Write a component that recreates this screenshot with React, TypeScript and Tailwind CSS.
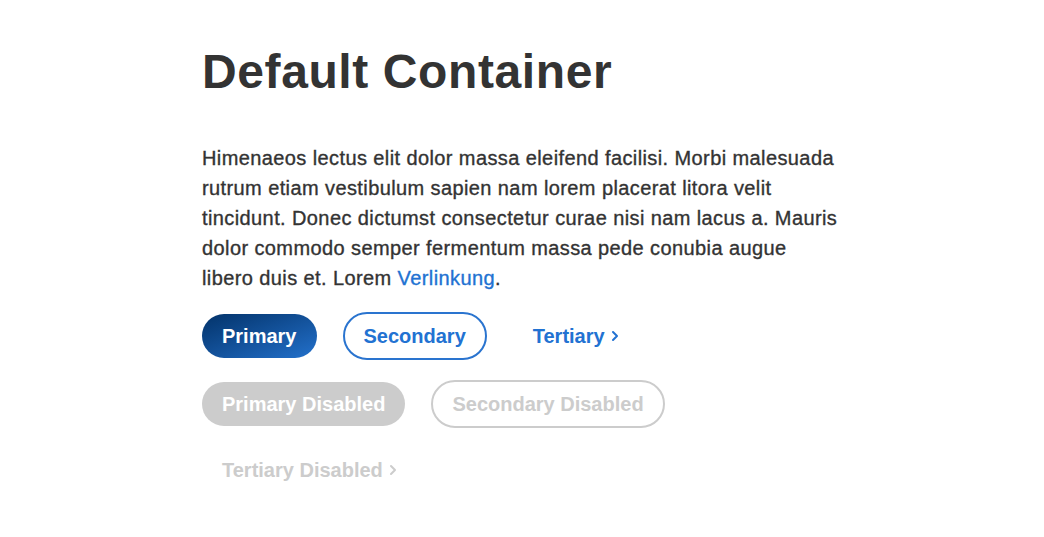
import React from "react"

function Chevron({ className }: { className?: string }) {
  return (
    <svg viewBox="0 0 8 12" className={className} fill="none" stroke="currentColor" strokeWidth="2" strokeLinecap="round" strokeLinejoin="round">
      <path d="M2 2l4 4-4 4" />
    </svg>
  )
}

export default function App() {
  return (
    <div className="min-h-screen bg-white" style={{ fontFamily: '"Liberation Sans", Arial, sans-serif' }}>
      <div className="mx-auto w-[640px] pt-[43px]">
        <h1 className="text-[48px] font-bold leading-[1.2] tracking-[0.6px] text-[#333333] mb-[42px]">
          Default Container
        </h1>
        <p className="text-[20px] leading-[30px] tracking-[0.4px] text-[#333333] [-webkit-text-stroke:0.35px_#333333] mb-[19px]">
          Himenaeos lectus elit dolor massa eleifend facilisi. Morbi malesuada rutrum etiam vestibulum sapien nam
          lorem placerat litora velit tincidunt. Donec dictumst consectetur curae nisi nam lacus a. Mauris dolor
          commodo semper fermentum massa pede conubia augue libero duis et. Lorem{" "}
          <a href="#" className="text-[#2272d2] [-webkit-text-stroke:0.35px_#2272d2]">
            Verlinkung
          </a>
          .
        </p>
        <div className="flex flex-wrap items-center gap-x-[26px] gap-y-5">
          <button className="h-[44px] px-5 rounded-full bg-gradient-to-br from-[#04336a] to-[#2371cc] text-white text-[20px] font-bold">
            Primary
          </button>
          <button className="h-[48px] px-[19px] rounded-full border-2 border-[#2a74cf] text-[#2272d2] text-[20px] font-bold">
            Secondary
          </button>
          <button className="h-[44px] px-5 flex items-center gap-[6px] text-[#2272d2] text-[20px] font-bold">
            Tertiary
            <Chevron className="w-[8px] h-[12px]" />
          </button>
          <button disabled className="h-[44px] px-5 rounded-full bg-[#cccccc] text-white text-[20px] font-bold">
            Primary Disabled
          </button>
          <button disabled className="h-[48px] px-[19px] rounded-full border-2 border-[#cccccc] text-[#cccccc] text-[20px] font-bold">
            Secondary Disabled
          </button>
          <button disabled className="h-[44px] px-5 flex items-center gap-[6px] text-[#cccccc] text-[20px] font-bold">
            Tertiary Disabled
            <Chevron className="w-[8px] h-[12px]" />
          </button>
        </div>
      </div>
    </div>
  )
}
